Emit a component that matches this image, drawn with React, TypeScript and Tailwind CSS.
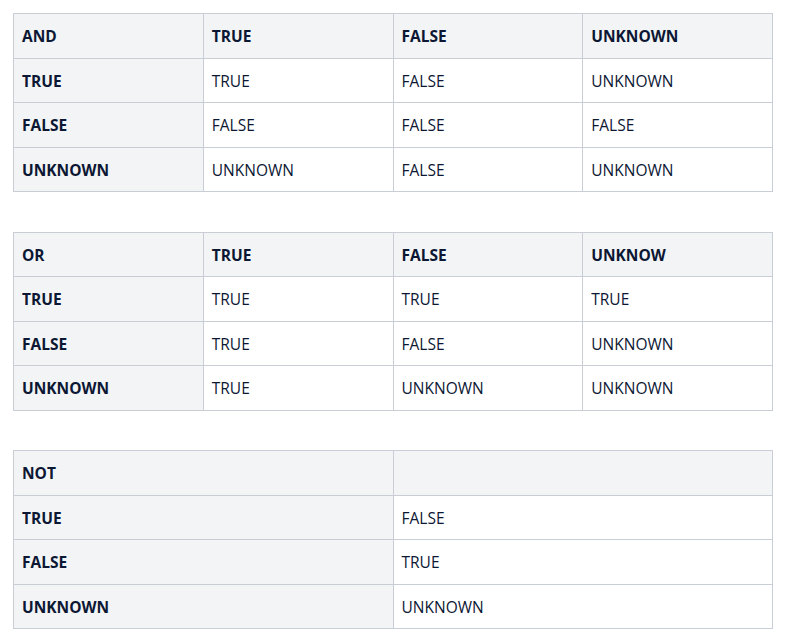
const andRows = [
  ['TRUE', 'TRUE', 'FALSE', 'UNKNOWN'],
  ['FALSE', 'FALSE', 'FALSE', 'FALSE'],
  ['UNKNOWN', 'UNKNOWN', 'FALSE', 'UNKNOWN'],
]

const orRows = [
  ['TRUE', 'TRUE', 'TRUE', 'TRUE'],
  ['FALSE', 'TRUE', 'FALSE', 'UNKNOWN'],
  ['UNKNOWN', 'TRUE', 'UNKNOWN', 'UNKNOWN'],
]

const notRows = [
  ['TRUE', 'FALSE'],
  ['FALSE', 'TRUE'],
  ['UNKNOWN', 'UNKNOWN'],
]

function TruthTable({ head, rows }: { head: string[]; rows: string[][] }) {
  const cell = 'border border-[#c8cdd6] px-2 pt-[11px] pb-[9px] text-left align-middle leading-[23.5px]'
  return (
    <table className="w-[760px] table-fixed border-collapse">
      <thead>
        <tr className="bg-[#f3f4f6]">
          {head.map((h, i) => (
            <th key={i} className={`${cell} font-bold`}>
              {h}
            </th>
          ))}
        </tr>
      </thead>
      <tbody>
        {rows.map((row, r) => (
          <tr key={r}>
            {row.map((c, i) =>
              i === 0 ? (
                <th key={i} className={`${cell} bg-[#f3f4f6] font-bold`}>
                  {c}
                </th>
              ) : (
                <td key={i} className={`${cell} bg-white font-normal`}>
                  {c}
                </td>
              )
            )}
          </tr>
        ))}
      </tbody>
    </table>
  )
}

export default function App() {
  return (
    <div
      className="min-h-screen bg-white pl-[13px] pt-[13px] text-[15.5px] text-[#0c1733]"
      style={{ fontFamily: '"Open Sans", "Noto Sans", sans-serif' }}
    >
      <div className="flex flex-col gap-[39.5px]">
        <TruthTable head={['AND', 'TRUE', 'FALSE', 'UNKNOWN']} rows={andRows} />
        <TruthTable head={['OR', 'TRUE', 'FALSE', 'UNKNOW']} rows={orRows} />
        <TruthTable head={['NOT', '']} rows={notRows} />
      </div>
    </div>
  )
}
